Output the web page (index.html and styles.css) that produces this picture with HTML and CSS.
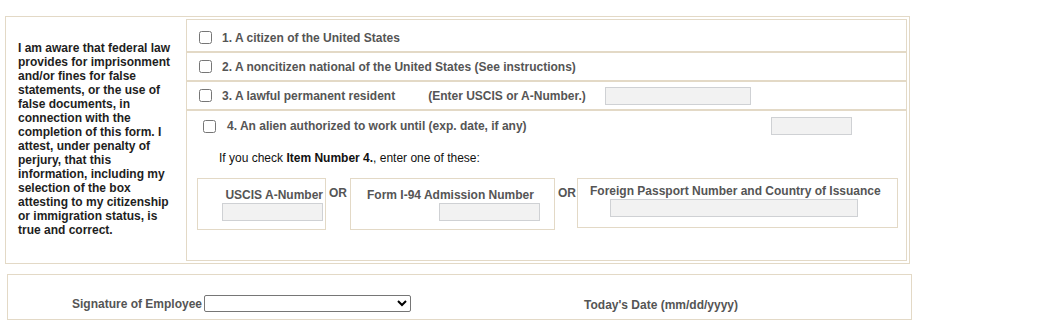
FILE: index.html
```html
<!DOCTYPE html>
<html lang="en">
<head>
  <meta charset="UTF-8">
  <title>Employee Attestation</title>
  <link rel="stylesheet" href="styles.css">
</head>
<body>

<div class="attest">
  <div class="attest-text">
    I am aware that federal law provides for imprisonment and/or fines for false statements, or the use of false documents, in connection with the completion of this form. I attest, under penalty of perjury, that this information, including my selection of the box attesting to my citizenship or immigration status, is true and correct.
  </div>

  <div class="status">
    <div class="status-row first">
      <input type="checkbox" class="chk">
      <span class="label">1. A citizen of the United States</span>
    </div>
    <div class="status-row">
      <input type="checkbox" class="chk">
      <span class="label">2. A noncitizen national of the United States (See instructions)</span>
    </div>
    <div class="status-row">
      <input type="checkbox" class="chk">
      <span class="label">3. A lawful permanent resident</span>
      <span class="label hint">(Enter USCIS or A-Number.)</span>
      <input type="text" class="field field-anum">
    </div>
    <div class="status-last">
      <div class="alien-line">
        <input type="checkbox" class="chk">
        <span class="label">4. An alien authorized to work until (exp. date, if any)</span>
        <input type="text" class="field field-exp">
      </div>
      <p class="check-note">If you check <b>Item Number 4.</b>, enter one of these:</p>
      <div class="doc-options">
        <div class="doc-box doc-uscis">
          <span class="label">USCIS A-Number</span>
          <input type="text" class="field field-uscis">
        </div>
        <span class="or">OR</span>
        <div class="doc-box doc-i94">
          <span class="label">Form I-94 Admission Number</span>
          <input type="text" class="field field-i94">
        </div>
        <span class="or or-last">OR</span>
        <div class="doc-box doc-passport">
          <span class="label">Foreign Passport Number and Country of Issuance</span>
          <input type="text" class="field field-passport">
        </div>
      </div>
    </div>
  </div>
</div>

<div class="sign">
  <span class="label sign-label">Signature of Employee</span>
  <select class="sign-select"></select>
  <span class="label date-label">Today's Date (mm/dd/yyyy)</span>
</div>

</body>
</html>
```

FILE: styles.css
```css
body {
  margin: 0;
  font-family: 'Liberation Sans', Arial, sans-serif;
  font-size: 12px;
  color: #222;
  background: #fff;
}
.attest {
  display: flex;
  width: 905px;
  height: 248px;
  margin: 16px 0 0 5px;
  border: 1px solid #e3d9c6;
  box-sizing: border-box;
}
.attest-text {
  width: 155px;
  padding: 0 13px 0 12px;
  align-self: center;
  font-weight: bold;
  line-height: 14px;
  color: #1e1e1e;
  margin-top: -2px;
}
.status {
  flex: 1;
  margin: 2px 2px 2px 0;
  border: 1px solid #e3d9c6;
}
.label {
  font-weight: bold;
  color: #555;
}
.status-row {
  display: flex;
  align-items: center;
  height: 27px;
  padding-left: 12px;
  border-bottom: 2px solid #e3d9c6;
}
.status-row.first {
  padding-top: 4px;
}
.chk {
  width: 13px;
  height: 13px;
  margin: 0 10px 0 0;
}
.hint {
  margin-left: 33px;
}
.field {
  height: 18px;
  padding: 0;
  border: 1px solid #cfd1d4;
  background: #f2f2f2;
  box-sizing: border-box;
}
.field-anum {
  width: 146px;
  margin-left: 19px;
}
.status-last {
  padding: 6px 0 0 16px;
}
.alien-line {
  display: flex;
  align-items: center;
  height: 18px;
}
.alien-line .chk {
  margin-right: 11px;
}
.field-exp {
  width: 81px;
  margin-left: 244px;
}
.check-note {
  margin: 16px 0 0 16px;
  line-height: 14px;
  color: #111;
}
.check-note b {
  color: #111;
}
.doc-options {
  display: flex;
  align-items: flex-start;
  margin: 13px 0 0 -6px;
}
.doc-box {
  display: flex;
  flex-direction: column;
  border: 1px solid #e3d9c6;
  box-sizing: border-box;
}
.doc-box .label {
  line-height: 14px;
}
.doc-box .field {
  margin-top: 1px;
}
.doc-uscis {
  width: 129px;
  height: 52px;
  padding: 9px 2px 0 24px;
  align-items: flex-end;
}
.field-uscis {
  width: 101px;
}
.doc-i94 {
  width: 205px;
  height: 52px;
  padding: 9px 14px 0 16px;
}
.field-i94 {
  width: 101px;
  align-self: flex-end;
}
.doc-passport {
  width: 321px;
  height: 50px;
  padding: 5px 8px 0 12px;
}
.field-passport {
  width: 248px;
  margin: 3px 0 0 20px;
}
.or {
  font-weight: bold;
  color: #555;
  margin: 8px 3px 0 3px;
}
.or-last {
  margin-right: 1px;
}
.sign {
  display: flex;
  align-items: center;
  width: 905px;
  height: 46px;
  margin: 10px 0 0 7px;
  padding: 13px 0 0 64px;
  border: 1px solid #e3d9c6;
  box-sizing: border-box;
}
.sign-label {
  margin-right: 2px;
}
.sign-select {
  width: 207px;
  height: 17px;
  font-size: 11px;
  padding: 0;
  border: 1px solid #767676;
  border-radius: 2px;
  background: #fff;
}
.date-label {
  margin: 2px 0 0 173px;
}
```
